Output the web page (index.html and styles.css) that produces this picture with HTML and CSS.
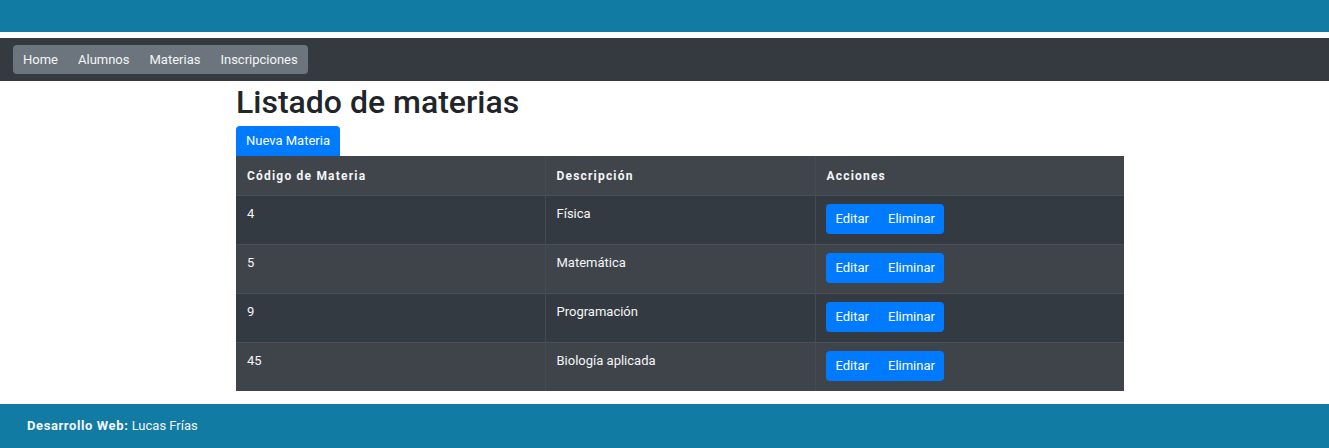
FILE: index.html
```html
<!DOCTYPE html>
<html lang="es">
<head>
<meta charset="utf-8">
<title>Listado de materias</title>
<link rel="stylesheet" href="styles.css">
</head>
<body>
<header class="topbar"></header>
<nav class="navbar">
  <div class="nav-group">
    <a class="nav-link" href="#">Home</a>
    <a class="nav-link" href="#">Alumnos</a>
    <a class="nav-link" href="#">Materias</a>
    <a class="nav-link" href="#">Inscripciones</a>
  </div>
</nav>
<main class="container">
  <h1 class="title">Listado de materias</h1>
  <a class="btn btn-new" href="#">Nueva Materia</a>
  <table class="table">
    <thead>
      <tr><th class="c1">Código de Materia</th><th class="c2">Descripción</th><th class="c3">Acciones</th></tr>
    </thead>
    <tbody>
      <tr><td>4</td><td>Física</td><td><div class="btn-group"><a class="btn" href="#">Editar</a><a class="btn" href="#">Eliminar</a></div></td></tr>
      <tr><td>5</td><td>Matemática</td><td><div class="btn-group"><a class="btn" href="#">Editar</a><a class="btn" href="#">Eliminar</a></div></td></tr>
      <tr><td>9</td><td>Programación</td><td><div class="btn-group"><a class="btn" href="#">Editar</a><a class="btn" href="#">Eliminar</a></div></td></tr>
      <tr><td>45</td><td>Biología aplicada</td><td><div class="btn-group"><a class="btn" href="#">Editar</a><a class="btn" href="#">Eliminar</a></div></td></tr>
    </tbody>
  </table>
</main>
<footer class="footer"><b>Desarrollo Web:</b> Lucas Frías</footer>
</body>
</html>
```
FILE: styles.css
```css
* { box-sizing: border-box; }
html, body { margin: 0; padding: 0; }
body {
  font-family: Roboto, "Liberation Sans", Arial, sans-serif;
  font-size: 13px;
  color: #212529;
  background: #fff;
}
.topbar { height: 32px; background: #127ba3; }
.navbar {
  margin-top: 6px;
  height: 43px;
  background: #343a40;
  padding: 7px 13px;
}
.nav-group {
  display: inline-flex;
  background: #6c757d;
  border-radius: 4px;
  height: 29px;
  align-items: center;
}
.nav-link {
  color: #f4f5f6;
  text-decoration: none;
  padding: 0 10px;
  line-height: 29px;
}
.container {
  margin-left: 236px;
  width: 888px;
}
.title {
  margin: 2px 0 5px;
  font-size: 32px;
  font-weight: 500;
  line-height: 38px;
  color: #212529;
}
.btn {
  display: inline-block;
  background: #007bff;
  color: #fff;
  text-decoration: none;
  font-size: 13px;
  line-height: 20px;
}
.btn-new {
  padding: 5px 10px 5px;
  border-radius: 4px 4px 0 0;
  vertical-align: top;
}
.table {
  border-collapse: collapse;
  width: 888px;
  table-layout: fixed;
  color: #f4f5f6;
  background: #343a40;
}
.table th, .table td {
  text-align: left;
  vertical-align: top;
  padding: 8px 11px 10px;
  line-height: 20px;
  border-top: 1px solid #4a5057;
  border-left: 1px solid #454b52;
}
.table th:first-child, .table td:first-child { border-left: none; }
.table thead th {
  border-top: none;
  padding-top: 10px;
  padding-bottom: 9px;
  background: #40454c;
  font-weight: 700;
  letter-spacing: 1.2px;
  font-size: 12px;
}
.c1 { width: 309px; }
.c2 { width: 270px; }
.c3 { width: 309px; }
.table tbody tr:nth-child(odd) td { background: #343a41; }
.table tbody tr:nth-child(even) td { background: #3f444b; }
.btn-group { display: inline-flex; border-radius: 4px; overflow: hidden; vertical-align: top; margin-left: -1px; }
.btn-group .btn { padding: 5px 10px; }
.btn-group .btn + .btn { padding-left: 9px; padding-right: 9px; }
.footer {
  margin-top: 13px;
  height: 44px;
  background: #127ba3;
  color: #f4f7f9;
  padding: 0 27px;
  line-height: 44px;
  font-size: 13px;
}
.footer b { letter-spacing: 0.6px; }
```
